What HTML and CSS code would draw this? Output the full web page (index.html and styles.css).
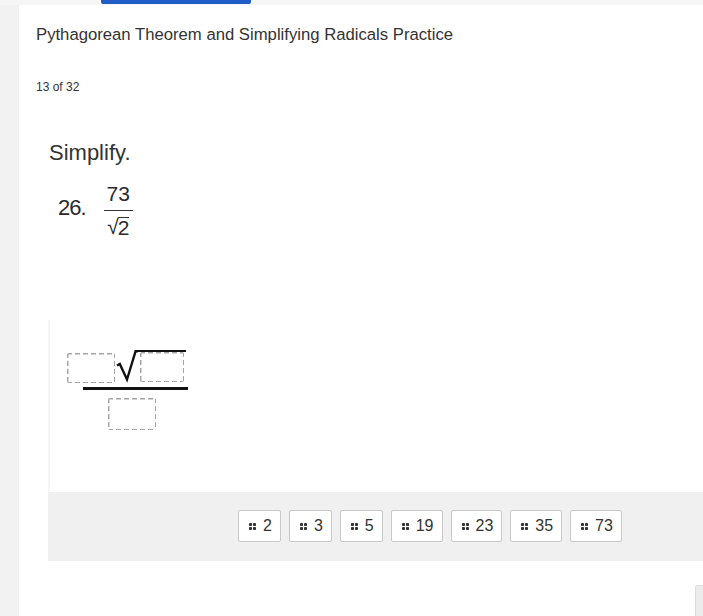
FILE: index.html
```html
<!DOCTYPE html>
<html lang="en">
<head>
<meta charset="utf-8">
<title>Pythagorean Theorem and Simplifying Radicals Practice</title>
<link rel="stylesheet" href="styles.css">
</head>
<body>
<div class="topbar"><div class="topbar-tab"></div></div>
<div class="page">
  <div class="rail"></div>
  <div class="main">
    <h1 class="title">Pythagorean Theorem and Simplifying Radicals Practice</h1>
    <div class="counter">13 of 32</div>
    <div class="question">
      <div class="prompt">Simplify.</div>
      <div class="problem">
        <span class="problem-num">26.</span>
        <span class="frac">
          <span class="frac-top">73</span>
          <span class="frac-bot"><span class="rad">&radic;</span><span class="rad-in">2</span></span>
        </span>
      </div>
      <div class="answer">
        <div class="expr">
          <div class="expr-num">
            <div class="slot"></div>
            <div class="radical">
              <svg class="radical-sign" width="22" height="33" viewBox="0 0 22 33">
                <path d="M1 15.5 L3.8 14 L11 29.5 L19.6 1.2 L22 1.2" fill="none" stroke="#111" stroke-width="2.4" stroke-linejoin="miter"/>
              </svg>
              <div class="radicand"><div class="slot slot-in"></div></div>
            </div>
          </div>
          <div class="expr-bar"></div>
          <div class="slot slot-den"></div>
        </div>
      </div>
      <div class="tray">
        <div class="chip"><span class="grip"><i></i><i></i><i></i><i></i></span>2</div>
        <div class="chip"><span class="grip"><i></i><i></i><i></i><i></i></span>3</div>
        <div class="chip"><span class="grip"><i></i><i></i><i></i><i></i></span>5</div>
        <div class="chip"><span class="grip"><i></i><i></i><i></i><i></i></span>19</div>
        <div class="chip"><span class="grip"><i></i><i></i><i></i><i></i></span>23</div>
        <div class="chip"><span class="grip"><i></i><i></i><i></i><i></i></span>35</div>
        <div class="chip"><span class="grip"><i></i><i></i><i></i><i></i></span>73</div>
      </div>
    </div>
  </div>
</div>
<div class="corner"></div>
</body>
</html>
```
FILE: styles.css
```css
html, body {
  margin: 0;
  padding: 0;
  background: #ffffff;
  font-family: "Liberation Sans", Arial, sans-serif;
  color: #333333;
  overflow: hidden;
}

.topbar {
  height: 5px;
  background: #f6f6f6;
  position: relative;
}

.topbar-tab {
  position: absolute;
  left: 101px;
  top: 0;
  width: 150px;
  height: 4px;
  background: #1f5cc6;
  border-radius: 0 0 2px 2px;
}

.page {
  display: flex;
  min-height: 611px;
}

.rail {
  width: 19px;
  flex: none;
  background: #f2f2f2;
}

.main {
  flex: 1;
  padding: 20px 0 0 17px;
}

.title {
  margin: 0;
  font-size: 16.7px;
  line-height: 19px;
  font-weight: normal;
  color: #333;
}

.counter {
  margin-top: 36px;
  font-size: 12px;
  line-height: 14px;
  color: #333;
}

.question {
  margin-top: 46px;
  margin-left: 12px;
}

.prompt {
  padding-left: 1px;
  font-size: 22px;
  line-height: 25px;
  color: #333;
}

.problem {
  display: flex;
  align-items: flex-start;
  margin-top: 19px;
  padding-left: 10px;
  font-size: 21px;
  color: #2a2a2a;
  height: 60px;
}

.problem-num {
  margin-top: 12px;
  margin-right: 18px;
  font-size: 22px;
  line-height: 24px;
  letter-spacing: -1px;
}

.frac {
  display: inline-flex;
  flex-direction: column;
  align-items: center;
}

.frac-top {
  line-height: 20px;
  padding: 0 3px 6px;
  border-bottom: 1.5px solid #333;
}

.frac-bot {
  margin-top: 5px;
  line-height: 22px;
  display: flex;
  align-items: flex-end;
}

.rad {
  font-size: 21px;
  margin-right: -1px;
}

.rad-in {
  border-top: 1.5px solid #333;
  line-height: 20px;
}

.answer {
  margin-top: 76px;
  height: 172px;
  border-left: 2px solid #f5f5f5;
  padding: 30px 0 0 17px;
  box-sizing: border-box;
}

.expr {
  display: flex;
  flex-direction: column;
  align-items: flex-start;
}

.expr-num {
  display: flex;
  align-items: flex-end;
}

.slot {
  width: 48px;
  height: 30px;
  border-radius: 2px;
  box-sizing: border-box;
  background-image:
    repeating-linear-gradient(90deg, #a5a5a5 0 5px, transparent 5px 8px),
    repeating-linear-gradient(90deg, #a5a5a5 0 5px, transparent 5px 8px),
    repeating-linear-gradient(180deg, #a5a5a5 0 5px, transparent 5px 8px),
    repeating-linear-gradient(180deg, #a5a5a5 0 5px, transparent 5px 8px);
  background-size: 100% 1.5px, 100% 1.5px, 1.5px 100%, 1.5px 100%;
  background-position: 0 0, 0 100%, 0 0, 100% 0;
  background-repeat: no-repeat;
}

.radical {
  display: flex;
  align-items: flex-start;
  margin-left: 1px;
}

.radical-sign {
  display: block;
  margin-right: -2px;
}

.radicand {
  border-top: 2.4px solid #111;
  padding: 0 2px 0 4px;
}

.slot-in {
  width: 44px;
}

.expr-bar {
  margin-top: 4px;
  margin-left: 16px;
  width: 105px;
  height: 3px;
  background: #111;
}

.slot-den {
  margin-top: 8px;
  margin-left: 41px;
  height: 32px;
}

.tray {
  height: 69px;
  background: #f0f0f0;
  display: flex;
  align-items: flex-start;
  gap: 8px;
  padding: 18px 0 0 190px;
  box-sizing: border-box;
}

.chip {
  display: flex;
  align-items: center;
  gap: 7px;
  height: 32px;
  padding: 0 8px 0 10px;
  box-sizing: border-box;
  background: #ffffff;
  border: 1px solid #c9c9c9;
  border-radius: 2px;
  font-size: 16px;
  color: #333;
}

.grip {
  display: grid;
  grid-template-columns: 3px 3px;
  gap: 1px;
}

.grip i {
  display: block;
  width: 3px;
  height: 3px;
  background: #333;
  border-radius: 0.8px;
}

.corner {
  position: absolute;
  left: 695px;
  top: 585px;
  width: 10px;
  height: 40px;
  background: #ececec;
  border: 1px solid #dcdcdc;
  border-radius: 2px;
}
```
